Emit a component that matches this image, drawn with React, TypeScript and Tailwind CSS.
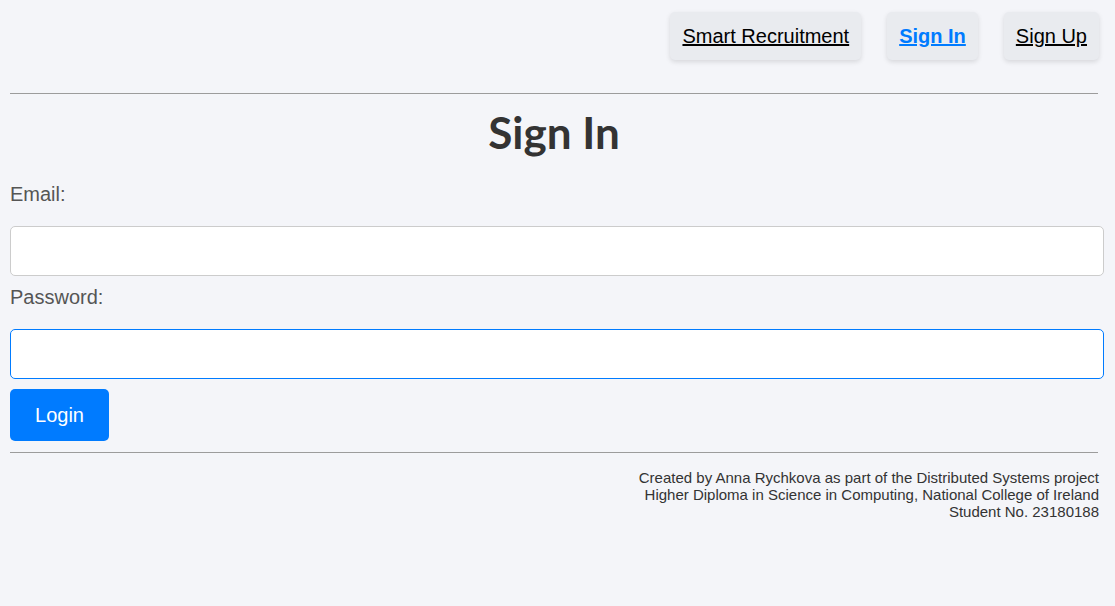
import React from 'react'

const NavLink = ({ label, active }: { label: string; active?: boolean }) => (
    <a
        href="#"
        className={
            active
                ? 'flex h-[48px] items-center rounded-[5px] bg-[#e9ebef] px-[12px] text-[20px] font-bold text-[#007bff] underline shadow-[0_2px_5px_rgba(0,0,0,0.12)]'
                : 'flex h-[48px] items-center rounded-[5px] bg-[#e9ebef] px-[12px] text-[20px] text-black underline shadow-[0_2px_5px_rgba(0,0,0,0.12)]'
        }
    >
        {label}
    </a>
)

const App = () => {
    return (
        <div className="min-h-[606px] bg-[#f4f5f9] font-['Liberation_Sans',Arial,sans-serif]">
            <div className="ml-[10px] w-[1088px]">
                {/* Top nav */}
                <header className="flex justify-end gap-[26px] pt-[12px] -mr-[1px]">
                    <NavLink label="Smart Recruitment" />
                    <NavLink label="Sign In" active />
                    <NavLink label="Sign Up" />
                </header>

                <hr className="mt-[33px] border-0 border-t border-[#9c9c9c]" />

                {/* Form */}
                <h1 className="mt-[12px] h-[52px] text-center font-['Lato',sans-serif] text-[44px] font-bold leading-[52px] text-[#333]">
                    Sign In
                </h1>

                <form className="flex flex-col">
                    <label className="mt-[25px] text-[20px] leading-[23px] text-[#555]">Email:</label>
                    <input
                        type="email"
                        className="mt-[20px] h-[50px] w-[1094px] rounded-[5px] border border-[#cccccc] bg-white px-3 outline-none"
                    />
                    <label className="mt-[10px] text-[20px] leading-[23px] text-[#555]">Password:</label>
                    <input
                        type="password"
                        className="mt-[20px] h-[50px] w-[1094px] rounded-[5px] border border-[#007bff] bg-white px-3 outline-none"
                    />
                    <button
                        type="button"
                        className="mt-[10px] h-[52px] w-[99px] rounded-[5px] bg-[#007bff] text-[20px] text-white"
                    >
                        Login
                    </button>
                </form>

                <hr className="mt-[11px] border-0 border-t border-[#9c9c9c]" />

                {/* Footer */}
                <footer className="mt-[16px] -mr-[1px] text-right text-[15px] leading-[17px] text-[#333]">
                    <p>Created by Anna Rychkova as part of the Distributed Systems project</p>
                    <p>Higher Diploma in Science in Computing, National College of Ireland</p>
                    <p>Student No. 23180188</p>
                </footer>
            </div>
        </div>
    )
}

export default App
